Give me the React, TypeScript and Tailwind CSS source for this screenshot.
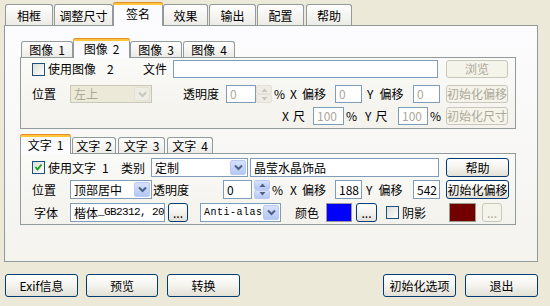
import React from "react";

type P = { className?: string; children?: React.ReactNode };

function Tab({ className = "", label }: { className?: string; label: string }) {
  return (
    <div
      className={`${className} h-[21px] shrink-0 rounded-t-[3px] border border-b-0 border-[#919B9C] bg-linear-to-b from-white to-[#ECEBE6] flex items-center justify-center pt-[1px]`}
    >
      {label}
    </div>
  );
}

function SelTab({ className = "", label }: { className?: string; label: string }) {
  return (
    <div
      className={`${className} relative z-10 -mb-px h-[24px] shrink-0 rounded-t-[3px] border border-b-0 border-[#919B9C] bg-[#FCFCFE] flex items-start justify-center pt-[5px]`}
    >
      <div className="absolute left-[-1px] right-[-1px] top-[-1px] h-[3px] rounded-t-[3px] border-t border-[#E68B2C] bg-[#FFC73C]" />
      {label}
    </div>
  );
}

function SubTab({ className = "", label, num }: { className?: string; label: string; num: string }) {
  return (
    <div
      className={`${className} h-[16px] shrink-0 rounded-t-[3px] border border-b-0 border-[#919B9C] bg-linear-to-b from-white to-[#ECEBE6] flex items-center justify-center pt-[1px]`}
    >
      {label}
      <span className="ml-[5px]">{num}</span>
    </div>
  );
}

function SubSelTab({ className = "", label, num }: { className?: string; label: string; num: string }) {
  return (
    <div
      className={`${className} relative z-10 -mb-px h-[20px] shrink-0 rounded-t-[3px] border border-b-0 border-[#919B9C] bg-[#FCFCFE] flex items-start justify-center pt-[4px]`}
    >
      <div className="absolute left-[-1px] right-[-1px] top-[-1px] h-[3px] rounded-t-[3px] border-t border-[#E68B2C] bg-[#FFC73C]" />
      {label}
      <span className="ml-[5px]">{num}</span>
    </div>
  );
}

function Label({ className = "", children }: P) {
  return <div className={`${className} shrink-0 h-full flex items-center whitespace-pre`}>{children}</div>;
}

function Check({ className = "", checked }: { className?: string; checked?: boolean }) {
  return (
    <div
      className={`${className} w-[13px] h-[13px] shrink-0 border border-[#1C5180] bg-linear-to-br from-[#DCDCD7] to-white flex items-center justify-center`}
    >
      {checked && (
        <svg width="9" height="9" viewBox="0 0 9 9">
          <path d="M1.5 4 L3.5 6.5 L7.5 1.5" stroke="#21A121" strokeWidth="2" fill="none" />
        </svg>
      )}
    </div>
  );
}

function Input({ className = "", children, disabled }: P & { disabled?: boolean }) {
  return (
    <div
      className={`${className} shrink-0 h-full border border-[#7F9DB9] bg-white px-[3px] flex items-center overflow-hidden whitespace-nowrap ${
        disabled ? "text-[#ACA899]" : ""
      }`}
    >
      {children}
    </div>
  );
}

function Btn({ className = "", children, disabled }: P & { disabled?: boolean }) {
  return (
    <div
      className={`${className} shrink-0 h-full flex items-center justify-center rounded-[3px] border whitespace-nowrap ${
        disabled
          ? "border-[#C9C7BA] text-[#ACA899] bg-[#F5F4EA]"
          : "border-[#003C74] bg-linear-to-b from-white via-[#F4F3EE] to-[#E3E1D6]"
      }`}
    >
      {children}
    </div>
  );
}

function Chevron({ color }: { color: string }) {
  return (
    <svg width="9" height="7" viewBox="0 0 9 7">
      <path d="M1 1.5 L4.5 5 L8 1.5" stroke={color} strokeWidth="2" fill="none" />
    </svg>
  );
}

function Select({ className = "", children, disabled, mono }: P & { disabled?: boolean; mono?: boolean }) {
  return (
    <div
      className={`${className} shrink-0 h-full flex border ${
        disabled ? "border-[#C9C7BA] bg-[#ECE9D8] text-[#ACA899]" : "border-[#7F9DB9] bg-white"
      }`}
    >
      <div
        className={`flex-1 min-w-0 pl-[3px] flex items-center overflow-hidden whitespace-nowrap ${
          mono ? "font-['Liberation_Mono',monospace] text-[10px] tracking-[0.5px]" : ""
        }`}
      >
        {children}
      </div>
      <div
        className={`w-[16px] m-px shrink-0 rounded-[2px] border flex items-center justify-center ${
          disabled
            ? "border-[#E3E1D6] bg-[#EEEDE5]"
            : "border-[#B9CBF5] bg-linear-to-b from-[#D6E1FC] to-[#B4C7F5]"
        }`}
      >
        <Chevron color={disabled ? "#C9C7BA" : "#4D6185"} />
      </div>
    </div>
  );
}

function Spin({ className = "", disabled }: { className?: string; disabled?: boolean }) {
  const btn = disabled
    ? "border-[#E3E1D6] bg-[#EEEDE5]"
    : "border-[#B9CBF5] bg-linear-to-b from-[#D6E1FC] to-[#B4C7F5]";
  const c = disabled ? "#C9C7BA" : "#4D6185";
  return (
    <div className={`${className} shrink-0 h-full flex flex-col`}>
      <div className={`flex-1 rounded-[2px] border ${btn} flex items-center justify-center`}>
        <svg width="7" height="4" viewBox="0 0 7 4">
          <path d="M0.5 4 L3.5 0.5 L6.5 4 Z" fill={c} />
        </svg>
      </div>
      <div className={`flex-1 rounded-[2px] border ${btn} flex items-center justify-center`}>
        <svg width="7" height="4" viewBox="0 0 7 4">
          <path d="M0.5 0 L3.5 3.5 L6.5 0 Z" fill={c} />
        </svg>
      </div>
    </div>
  );
}

export default function App() {
  return (
    <div className="w-[550px] h-[306px] overflow-hidden bg-[#ECE9D8] text-[12px] leading-none text-black font-['Noto_Sans_CJK_SC',sans-serif]">
      {/* top tabs */}
      <div className="flex items-end h-[25px]">
        <Tab className="ml-[5px] w-[48px]" label="相框" />
        <Tab className="ml-[1px] w-[59px]" label="调整尺寸" />
        <SelTab className="w-[50px]" label="签名" />
        <Tab className="w-[45px]" label="效果" />
        <Tab className="ml-[1px] w-[47px]" label="输出" />
        <Tab className="ml-[1px] w-[47px]" label="配置" />
        <Tab className="ml-[2px] w-[46px]" label="帮助" />
      </div>

      {/* panel */}
      <div className="ml-[4px] w-[534px] h-[237px] border border-[#919B9C] bg-linear-to-b from-[#FCFCFE] to-[#F4F3EE]">
        {/* image tabs */}
        <div className="mt-[12px] flex items-end h-[19px]">
          <SubTab className="ml-[16px] w-[52px]" label="图像" num="1" />
          <SubSelTab className="w-[57px]" label="图像" num="2" />
          <SubTab className="w-[52px]" label="图像" num="3" />
          <SubTab className="ml-[1px] w-[52px]" label="图像" num="4" />
        </div>
        <div className="ml-[15px] w-[496px] h-[72px] border border-[#919B9C] bg-linear-to-b from-[#FAFAF8] to-[#F3F2EC]">
          <div className="mt-[2px] h-[18px] flex items-center">
            <Check className="ml-[11px]" />
            <Label className="ml-[3px] w-[95px]">
              使用图像<span className="ml-[11px]">2</span>
            </Label>
            <Label className="w-[30px]">文件</Label>
            <Input className="w-[265px]"> </Input>
            <Btn className="ml-[8px] w-[62px]" disabled>
              浏览
            </Btn>
          </div>
          <div className="mt-[7px] h-[18px] flex items-center">
            <Label className="ml-[11px] w-[38px]">位置</Label>
            <Select className="w-[82px]" disabled>
              左上
            </Select>
            <Label className="ml-[31px] w-[43px]">透明度</Label>
            <Input className="w-[30px]" disabled>
              0
            </Input>
            <Spin className="w-[16px]" disabled />
            <Label className="w-[18px] pl-[2px]">%</Label>
            <Label className="w-[45px]">
              X<span className="ml-[5px]">偏移</span>
            </Label>
            <Input className="w-[27px]" disabled>
              0
            </Input>
            <Label className="w-[51px] pl-[5px]">
              Y<span className="ml-[6px]">偏移</span>
            </Label>
            <Input className="w-[27px]" disabled>
              0
            </Input>
            <Btn className="ml-[6px] w-[62px]" disabled>
              初始化偏移
            </Btn>
          </div>
          <div className="mt-[4px] h-[18px] flex items-center">
            <Label className="ml-[261px] w-[31px]">
              X<span className="ml-[4px]">尺</span>
            </Label>
            <Input className="w-[31px]" disabled>
              100
            </Input>
            <Label className="w-[21px] pl-[2px]">%</Label>
            <Label className="w-[33px]">
              Y<span className="ml-[4px]">尺</span>
            </Label>
            <Input className="w-[30px]" disabled>
              100
            </Input>
            <Label className="w-[18px] pl-[2px]">%</Label>
            <Btn className="w-[62px]" disabled>
              初始化尺寸
            </Btn>
          </div>
        </div>

        {/* text tabs */}
        <div className="mt-[5px] flex items-end h-[19px]">
          <SubSelTab className="ml-[15px] w-[51px]" label="文字" num="1" />
          <SubTab className="ml-[1px] w-[44px]" label="文字" num="2" />
          <SubTab className="ml-[2px] w-[47px]" label="文字" num="3" />
          <SubTab className="ml-[2px] w-[46px]" label="文字" num="4" />
        </div>
        <div className="ml-[15px] w-[496px] h-[72px] border border-[#919B9C] bg-linear-to-b from-[#FAFAF8] to-[#F3F2EC]">
          <div className="mt-[4px] h-[19px] flex items-center">
            <Check className="ml-[11px]" checked />
            <Label className="ml-[3px] w-[73px]">
              使用文字<span className="ml-[6px]">1</span>
            </Label>
            <Label className="w-[30px]">类别</Label>
            <Select className="w-[97px]">定制</Select>
            <Input className="ml-[2px] w-[189px]">晶莹水晶饰品</Input>
            <Btn className="ml-[7px] w-[63px]">帮助</Btn>
          </div>
          <div className="mt-[3px] h-[19px] flex items-center">
            <Label className="ml-[11px] w-[38px]">位置</Label>
            <Select className="w-[82px]">顶部居中</Select>
            <Label className="ml-[1px] w-[70px]">透明度</Label>
            <Input className="w-[29px]">0</Input>
            <Spin className="ml-[2px] w-[16px]" />
            <Label className="w-[17px] pl-[2px]">%</Label>
            <Label className="w-[48px] pl-[3px]">
              X<span className="ml-[5px]">偏移</span>
            </Label>
            <Input className="w-[27px]">188</Input>
            <Label className="w-[51px] pl-[4px]">
              Y<span className="ml-[6px]">偏移</span>
            </Label>
            <Input className="w-[27px]">542</Input>
            <Btn className="ml-[6px] w-[63px]">初始化偏移</Btn>
          </div>
          <div className="mt-[4px] h-[19px] flex items-center">
            <Label className="ml-[13px] w-[36px]">字体</Label>
            <Input className="w-[95px]">
              楷体
              <span className="font-['Liberation_Mono',monospace] text-[11px] tracking-[-0.6px]">_GB2312, 20</span>
            </Input>
            <Btn className="ml-[3px] w-[20px]">...</Btn>
            <Select className="ml-[12px] w-[81px]" mono>
              Anti-alasing
            </Select>
            <Label className="w-[45px] pl-[14px]">颜色</Label>
            <div className="w-[26px] h-full shrink-0 border border-[#9D9B8F] bg-[#0000FF]" />
            <Btn className="ml-[4px] w-[21px]">...</Btn>
            <Check className="ml-[9px]" />
            <Label className="ml-[3px] w-[47px]">阴影</Label>
            <div className="w-[27px] h-full shrink-0 border border-[#9D9B8F] bg-[#720000]" />
            <Btn className="ml-[6px] w-[20px]" disabled>
              ...
            </Btn>
          </div>
        </div>
      </div>

      {/* bottom buttons */}
      <div className="mt-[12px] h-[23px] flex">
        <Btn className="ml-[5px] w-[73px]">Exif信息</Btn>
        <Btn className="ml-[8px] w-[72px]">预览</Btn>
        <Btn className="ml-[9px] w-[73px]">转换</Btn>
        <Btn className="ml-[143px] w-[73px]">初始化选项</Btn>
        <Btn className="ml-[9px] w-[73px]">退出</Btn>
      </div>
    </div>
  );
}
